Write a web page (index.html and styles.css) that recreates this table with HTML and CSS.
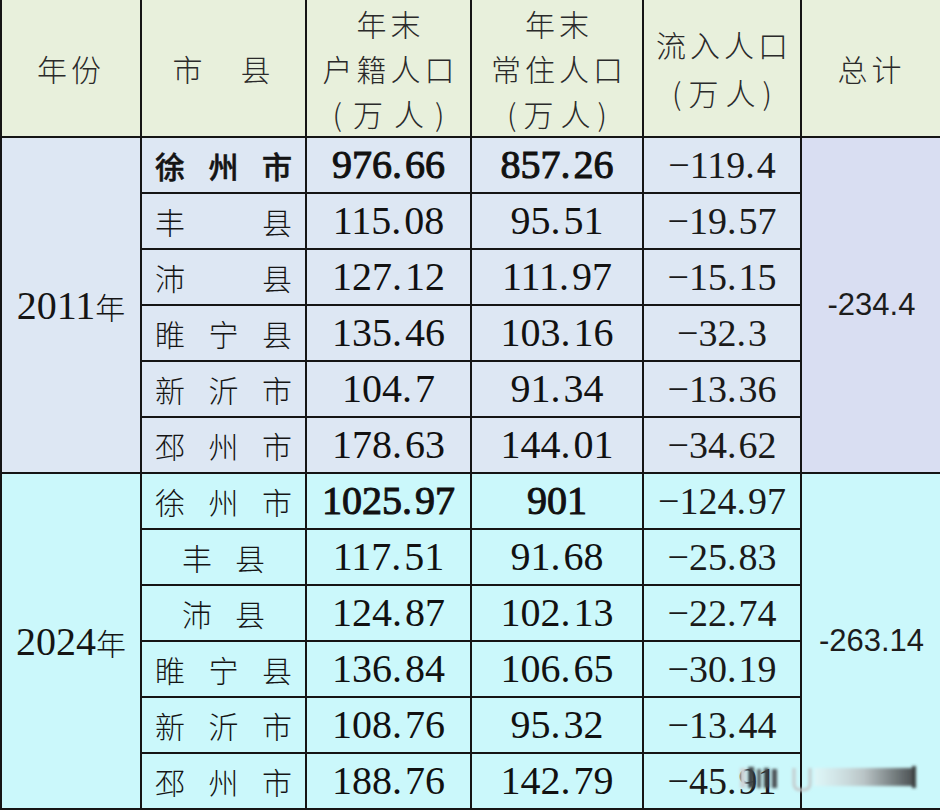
FILE: index.html
```html
<!DOCTYPE html>
<html lang="zh-CN">
<head>
<meta charset="utf-8">
<title>徐州人口</title>
<link rel="stylesheet" href="styles.css">
</head>
<body>
<div class="page">
<table class="pop">
  <colgroup>
    <col class="c-year"><col class="c-name"><col class="c-hj"><col class="c-cz"><col class="c-lr"><col class="c-tot">
  </colgroup>
  <thead>
    <tr class="head">
      <th class="h-year">年份</th>
      <th class="h-name">市　县</th>
      <th><span class="hl">年末</span><span class="hl">户籍人口</span><span class="hl par wide">(万人)</span></th>
      <th><span class="hl">年末</span><span class="hl">常住人口</span><span class="hl par">(万人)</span></th>
      <th class="two"><span class="hl">流入人口</span><span class="hl par">(万人)</span></th>
      <th class="h-tot">总计</th>
    </tr>
  </thead>
  <tbody class="g2011">
    <tr>
      <td rowspan="6" class="year"><span class="yn">2011</span>年</td>
      <td class="name bold"><div class="spread"><span>徐</span><span>州</span><span>市</span></div></td>
      <td class="num bold">976<span class="pt">.</span>66</td>
      <td class="num bold">857<span class="pt">.</span>26</td>
      <td class="num flow">−119<span class="pt">.</span>4</td>
      <td rowspan="6" class="total t2011">-234.4</td>
    </tr>
    <tr>
      <td class="name"><div class="spread"><span>丰</span><span>县</span></div></td>
      <td class="num">115<span class="pt">.</span>08</td><td class="num">95<span class="pt">.</span>51</td><td class="num flow">−19<span class="pt">.</span>57</td>
    </tr>
    <tr>
      <td class="name"><div class="spread"><span>沛</span><span>县</span></div></td>
      <td class="num">127<span class="pt">.</span>12</td><td class="num">111<span class="pt">.</span>97</td><td class="num flow">−15<span class="pt">.</span>15</td>
    </tr>
    <tr>
      <td class="name"><div class="spread"><span>睢</span><span>宁</span><span>县</span></div></td>
      <td class="num">135<span class="pt">.</span>46</td><td class="num">103<span class="pt">.</span>16</td><td class="num flow">−32<span class="pt">.</span>3</td>
    </tr>
    <tr>
      <td class="name"><div class="spread"><span>新</span><span>沂</span><span>市</span></div></td>
      <td class="num">104<span class="pt">.</span>7</td><td class="num">91<span class="pt">.</span>34</td><td class="num flow">−13<span class="pt">.</span>36</td>
    </tr>
    <tr>
      <td class="name"><div class="spread"><span>邳</span><span>州</span><span>市</span></div></td>
      <td class="num">178<span class="pt">.</span>63</td><td class="num">144<span class="pt">.</span>01</td><td class="num flow">−34<span class="pt">.</span>62</td>
    </tr>
  </tbody>
  <tbody class="g2024">
    <tr>
      <td rowspan="6" class="year"><span class="yn">2024</span>年</td>
      <td class="name"><div class="spread"><span>徐</span><span>州</span><span>市</span></div></td>
      <td class="num bold">1025<span class="pt">.</span>97</td>
      <td class="num bold">901</td>
      <td class="num flow">−124<span class="pt">.</span>97</td>
      <td rowspan="6" class="total t2024">-263.14</td>
    </tr>
    <tr>
      <td class="name"><div class="spread narrow"><span>丰</span><span>县</span></div></td>
      <td class="num">117<span class="pt">.</span>51</td><td class="num">91<span class="pt">.</span>68</td><td class="num flow">−25<span class="pt">.</span>83</td>
    </tr>
    <tr>
      <td class="name"><div class="spread narrow"><span>沛</span><span>县</span></div></td>
      <td class="num">124<span class="pt">.</span>87</td><td class="num">102<span class="pt">.</span>13</td><td class="num flow">−22<span class="pt">.</span>74</td>
    </tr>
    <tr>
      <td class="name"><div class="spread"><span>睢</span><span>宁</span><span>县</span></div></td>
      <td class="num">136<span class="pt">.</span>84</td><td class="num">106<span class="pt">.</span>65</td><td class="num flow">−30<span class="pt">.</span>19</td>
    </tr>
    <tr>
      <td class="name"><div class="spread"><span>新</span><span>沂</span><span>市</span></div></td>
      <td class="num">108<span class="pt">.</span>76</td><td class="num">95<span class="pt">.</span>32</td><td class="num flow">−13<span class="pt">.</span>44</td>
    </tr>
    <tr>
      <td class="name"><div class="spread"><span>邳</span><span>州</span><span>市</span></div></td>
      <td class="num">188<span class="pt">.</span>76</td><td class="num">142<span class="pt">.</span>79</td><td class="num flow">−45<span class="pt">.</span>91</td>
    </tr>
  </tbody>
</table>
<svg class="mark" width="190" height="34" viewBox="0 0 190 34" aria-hidden="true">
  <defs>
    <filter id="bl" x="-10%" y="-30%" width="120%" height="160%"><feGaussianBlur stdDeviation="1.6"/></filter>
    <linearGradient id="gr" x1="0" x2="1" y1="0" y2="0">
      <stop offset="0" stop-color="#e8f4f5" stop-opacity="0.6"/>
      <stop offset="0.5" stop-color="#b9c4c6"/>
      <stop offset="1" stop-color="#4a5052"/>
    </linearGradient>
  </defs>
  <g filter="url(#bl)">
    <rect x="4" y="6" width="6" height="20" fill="#d0d6d8"/>
    <rect x="12" y="5" width="6" height="21" fill="#3e4446"/>
    <rect x="21" y="7" width="4" height="19" fill="#5a6062"/>
    <rect x="28" y="6" width="5" height="20" fill="#3a4042"/>
    <rect x="36" y="7" width="5" height="19" fill="#4a5052"/>
    <path d="M58 6 V22 Q58 28 66 28 Q74 28 74 22 V6" fill="none" stroke="#c4cacc" stroke-width="3"/>
    <rect x="78" y="6" width="100" height="18" fill="url(#gr)"/>
    <rect x="176" y="4" width="4" height="22" fill="#3a3f41"/>
  </g>
</svg>
</div>
</body>
</html>
```

FILE: styles.css
```css
html, body {
  margin: 0;
  padding: 0;
  background: #ffffff;
}

.page {
  position: relative;
  width: 940px;
  height: 812px;
  overflow: hidden;
}

.pop {
  border-collapse: collapse;
  table-layout: fixed;
  width: 941px;
  color: #151515;
  font-family: "Noto Sans CJK SC", sans-serif;
  font-weight: 300;
}

.c-year { width: 140px; }
.c-name { width: 165px; }
.c-hj { width: 165px; }
.c-cz { width: 172px; }
.c-lr { width: 158px; }
.c-tot { width: 141px; }

.pop th,
.pop td {
  border: 2px solid #151515;
  padding: 0;
  text-align: center;
  vertical-align: middle;
}

.pop tr {
  height: 56px;
}

.pop tr.head {
  height: 137px;
}

.head th {
  background: #e8f0dc;
  font-weight: 300;
  font-size: 30px;
  line-height: 45px;
  letter-spacing: 4px;
  color: #2a2a2a;
  border-top: none;
}

.hl {
  display: block;
  margin-right: -4px;
}

.hl.par {
  letter-spacing: 7px;
  margin-right: -7px;
}

.hl.par.wide {
  letter-spacing: 11px;
  margin-right: -11px;
}

.two .hl {
  line-height: 48px;
}

.h-year {
  letter-spacing: 6px;
}

.h-name {
  letter-spacing: 6px;
}

.h-tot {
  letter-spacing: 6px;
}

.g2011 td {
  background: #dde7f3;
}

.g2011 td.total {
  background: #d9def2;
}

.g2024 td {
  background: #cbf8fb;
}

.g2024 td.total {
  background: #cbf8fb;
}

.year {
  font-size: 30px;
  padding-top: 4px;
}

.yn {
  font-family: "Liberation Serif", serif;
  font-size: 40px;
  font-weight: 400;
}

.name {
  font-size: 30px;
}

.spread {
  display: flex;
  justify-content: space-between;
  padding: 0 13px 0 13px;
  line-height: 40px;
}

.spread.narrow {
  padding: 0 40px;
}

.name.bold {
  font-weight: 500;
  -webkit-text-stroke: 0.5px #111;
}

.num {
  font-family: "Liberation Serif", serif;
  font-size: 40px;
  font-weight: 400;
  line-height: 44px;
  color: #111;
}

.pt {
  margin-right: 3px;
}

.num.bold {
  -webkit-text-stroke: 1px #111;
}

.num.flow {
  font-size: 38px;
  color: #1a1a1a;
}

.num.flow .pt {
  margin-right: 2px;
}

.total {
  font-family: "Liberation Sans", Arial, sans-serif;
  font-size: 31px;
  font-weight: 400;
  color: #1c1c1c;
  border-right: none;
}

.mark {
  position: absolute;
  left: 736px;
  top: 762px;
}
```
